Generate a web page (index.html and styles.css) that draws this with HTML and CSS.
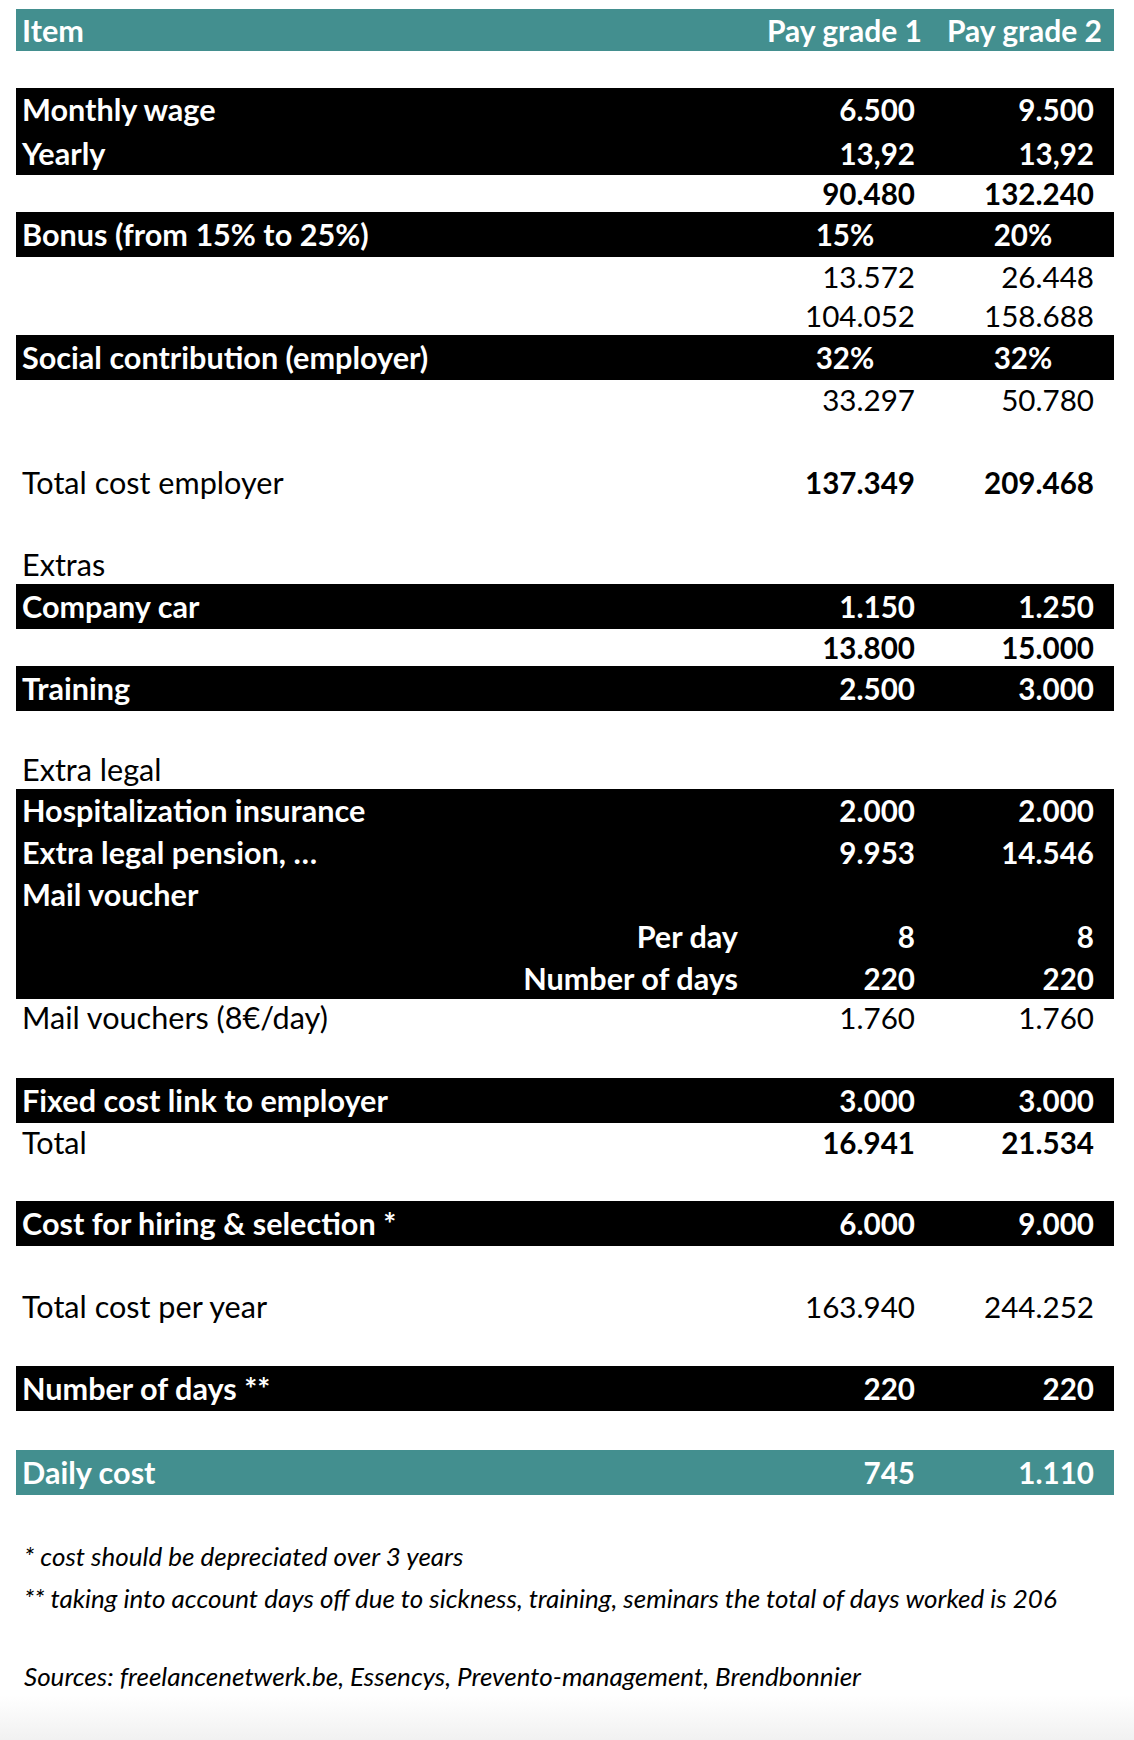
FILE: index.html
```html
<!DOCTYPE html>
<html lang="en">
<head>
<meta charset="utf-8">
<title>Cost of an employee</title>
<link rel="stylesheet" href="styles.css">
</head>
<body>
<div class="sheet">
  <div class="row head teal bold"><span class="lbl">Item</span><span class="c1">Pay grade 1</span><span class="c2">Pay grade 2</span></div>
  <div class="row short"></div>
  <div class="band bold">
    <div class="row r2"><span class="lbl">Monthly wage</span><span class="c1">6.500</span><span class="c2">9.500</span></div>
    <div class="row r2"><span class="lbl">Yearly</span><span class="c1">13,92</span><span class="c2">13,92</span></div>
  </div>
  <div class="row short bold"><span class="lbl"></span><span class="c1">90.480</span><span class="c2">132.240</span></div>
  <div class="row single band bold"><span class="lbl">Bonus (from 15% to 25%)</span><span class="c1 pct">15%</span><span class="c2 pct">20%</span></div>
  <div class="row"><span class="lbl"></span><span class="c1">13.572</span><span class="c2">26.448</span></div>
  <div class="row"><span class="lbl"></span><span class="c1">104.052</span><span class="c2">158.688</span></div>
  <div class="row single band bold"><span class="lbl">Social contribution (employer)</span><span class="c1 pct">32%</span><span class="c2 pct">32%</span></div>
  <div class="row"><span class="lbl"></span><span class="c1">33.297</span><span class="c2">50.780</span></div>
  <div class="row tall"></div>
  <div class="row tall"><span class="lbl">Total cost employer</span><span class="c1 bold">137.349</span><span class="c2 bold">209.468</span></div>
  <div class="row tall"></div>
  <div class="row"><span class="lbl">Extras</span></div>
  <div class="row single band bold"><span class="lbl">Company car</span><span class="c1">1.150</span><span class="c2">1.250</span></div>
  <div class="row short bold"><span class="lbl"></span><span class="c1">13.800</span><span class="c2">15.000</span></div>
  <div class="row single band bold"><span class="lbl">Training</span><span class="c1">2.500</span><span class="c2">3.000</span></div>
  <div class="row"></div>
  <div class="row"><span class="lbl">Extra legal</span></div>
  <div class="band bold">
    <div class="row r5"><span class="lbl">Hospitalization insurance</span><span class="c1">2.000</span><span class="c2">2.000</span></div>
    <div class="row r5"><span class="lbl">Extra legal pension, …</span><span class="c1">9.953</span><span class="c2">14.546</span></div>
    <div class="row r5"><span class="lbl">Mail voucher</span></div>
    <div class="row r5"><span class="lbl sub">Per day</span><span class="c1">8</span><span class="c2">8</span></div>
    <div class="row r5"><span class="lbl sub">Number of days</span><span class="c1">220</span><span class="c2">220</span></div>
  </div>
  <div class="row short"><span class="lbl">Mail vouchers (8€/day)</span><span class="c1">1.760</span><span class="c2">1.760</span></div>
  <div class="row tall"></div>
  <div class="row single band bold"><span class="lbl">Fixed cost link to employer</span><span class="c1">3.000</span><span class="c2">3.000</span></div>
  <div class="row"><span class="lbl">Total</span><span class="c1 bold">16.941</span><span class="c2 bold">21.534</span></div>
  <div class="row"></div>
  <div class="row single band bold"><span class="lbl">Cost for hiring &amp; selection *</span><span class="c1">6.000</span><span class="c2">9.000</span></div>
  <div class="row"></div>
  <div class="row tall"><span class="lbl">Total cost per year</span><span class="c1">163.940</span><span class="c2">244.252</span></div>
  <div class="row"></div>
  <div class="row single band bold"><span class="lbl">Number of days **</span><span class="c1">220</span><span class="c2">220</span></div>
  <div class="row"></div>
  <div class="row single teal bold"><span class="lbl">Daily cost</span><span class="c1">745</span><span class="c2">1.110</span></div>
</div>
<div class="notes">
  <p class="note">* cost should be depreciated over 3 years</p>
  <p class="note">** taking into account days off due to sickness, training, seminars the total of days worked is 206</p>
  <p class="note gap">Sources: freelancenetwerk.be, Essencys, Prevento-management, Brendbonnier</p>
</div>
</body>
</html>
```

FILE: styles.css
```css
html {
  min-height: 1740px;
  background: linear-gradient(to bottom, #ffffff 0, #ffffff 1695px, #f1f1f1 1740px);
}

body {
  margin: 0;
  font-family: Lato, "Liberation Sans", sans-serif;
  color: #000;
}

.sheet {
  margin: 9px 20px 0 16px;
  font-size: 30px;
}

.row {
  display: grid;
  grid-template-columns: 1fr 168px 182px;
  align-items: center;
  height: 39px;
  white-space: nowrap;
}

.row.short { height: 37px; }
.row.tall { height: 42px; }
.row.head { height: 42px; }
.row.single { height: 45px; }
.row.r2 { height: 43.5px; }
.row.r5 { height: 42px; }

.bold { font-weight: 700; }

.band { background: #000; color: #fff; }
.teal { background: #438f8f; color: #fff; }

.lbl { padding-left: 6px; font-size: 30.6px; }
.lbl.sub { text-align: right; padding-right: 26px; }

.c1, .c2 { text-align: right; font-size: 29.6px; }
.c1 { padding-right: 17px; }
.c2 { padding-right: 20px; }
.head .c1 { padding-right: 10px; font-size: 30px; }
.head .c2 { padding-right: 12px; font-size: 30px; }

.c1.pct, .c2.pct { text-align: center; padding-right: 0; }
.c1.pct { padding-right: 6px; }

.notes {
  margin: 40px 0 0 24px;
  font-style: italic;
  font-size: 26px;
}

.note {
  margin: 0;
  height: 42px;
  line-height: 42px;
}

.note.gap { margin-top: 36px; }
```
